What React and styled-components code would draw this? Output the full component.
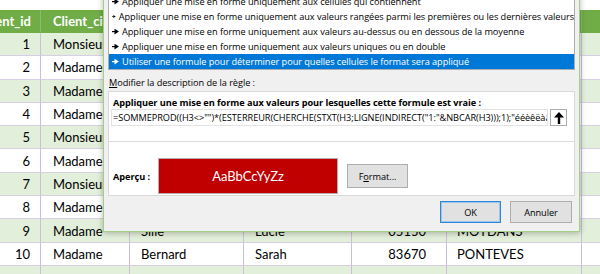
import React from 'react';
import styled, { createGlobalStyle } from 'styled-components';

const GlobalStyle = createGlobalStyle`
  html, body { margin: 0; padding: 0; background: #fff; }
  body { width: 600px; height: 274px; overflow: hidden; }
`;

const Page = styled.div`
  position: relative;
  width: 600px;
  height: 274px;
  overflow: hidden;
  background: #fff;
`;

const COLS = '70px 89px 114px 108px 95px 135px 80px';

const Sheet = styled.div`
  margin-left: -29px;
  padding-top: 10px;
  font-family: Lato, "Liberation Sans", sans-serif;
  font-size: 13px;
  color: #000;
`;

const Row = styled.div`
  display: grid;
  grid-template-columns: ${COLS};
  height: ${p => (p.$header ? '23px' : '23.3px')};
  background: ${p => (p.$header ? '#70ad47' : p.$alt ? '#e2efda' : '#fff')};
  color: ${p => (p.$header ? '#fff' : '#000')};
  font-weight: ${p => (p.$header ? 700 : 400)};
`;

const Cell = styled.div`
  display: flex;
  align-items: center;
  justify-content: ${p => (p.$right ? 'flex-end' : 'flex-start')};
  padding: ${p => (p.$right ? `0 ${p.$pad}px 0 0` : `0 0 0 ${p.$pad}px`)};
  border-right: 1px solid ${p => (p.$header ? '#8fb873' : '#cbbddc')};
  border-bottom: 1px solid ${p => (p.$header ? 'transparent' : '#d8cfe6')};
  white-space: nowrap;
  overflow: hidden;
  box-sizing: border-box;
`;

const Dialog = styled.div`
  position: absolute;
  left: 103px;
  top: -40px;
  width: 477px;
  height: 272px;
  box-sizing: border-box;
  background: #f0f0f0;
  border: 1px solid #a3cf85;
  box-shadow: 0 1px 6px rgba(0, 0, 0, 0.28);
  padding: 17px 4px 0 4px;
  display: flex;
  flex-direction: column;
  font-family: "Open Sans", "Noto Sans", sans-serif;
  font-size: 9.2px;
  letter-spacing: -0.05px;
  color: #000;
`;

const ListBox = styled.div`
  height: 92px;
  box-sizing: border-box;
  background: #fff;
  border: 1px solid #acacac;
  overflow: hidden;
`;

const Item = styled.div`
  height: 15px;
  display: flex;
  align-items: center;
  gap: 3px;
  padding-left: 3px;
  white-space: nowrap;
  background: ${p => (p.$selected ? '#0078d7' : 'transparent')};
  color: ${p => (p.$selected ? '#fff' : '#000')};
`;

const Label = styled.div`
  margin-top: 7px;
  height: 12px;
  line-height: 12px;
  padding-left: 1px;
`;

const Panel = styled.div`
  margin-top: 2px;
  background: #fff;
  border: 1px solid #d9d9d9;
  display: flex;
  flex-direction: column;
`;

const RuleSection = styled.div`
  height: 50px;
  box-sizing: border-box;
  padding: 5px 0 0 4px;
  border-bottom: 1px solid #dcdcdc;
`;

const RuleTitle = styled.div`
  font-weight: 700;
  height: 12px;
  line-height: 12px;
  white-space: nowrap;
  letter-spacing: -0.06px;
`;

const FormulaRow = styled.div`
  display: flex;
  align-items: flex-start;
  gap: 2px;
  margin-left: -2px;
`;

const FormulaInput = styled.div`
  width: 437px;
  height: 17px;
  box-sizing: border-box;
  border: 1px solid #e3e3e3;
  padding: 0 1px;
  line-height: 15px;
  white-space: nowrap;
  overflow: hidden;
`;

const CollapseButton = styled.div`
  width: 17px;
  height: 17px;
  box-sizing: border-box;
  border: 1px solid #adadad;
  background: #fff;
  display: flex;
  align-items: center;
  justify-content: center;
`;

const PreviewSection = styled.div`
  height: 53px;
  box-sizing: border-box;
  padding: 16px 0 1px 4px;
  display: flex;
  align-items: center;
`;

const PreviewLabel = styled.div`
  width: 45px;
  font-weight: 700;
`;

const PreviewBox = styled.div`
  width: 180px;
  height: 36px;
  box-sizing: border-box;
  background: #c00000;
  border: 1px solid #b9a9a9;
  color: #fff;
  display: flex;
  align-items: center;
  justify-content: center;
  font-family: Lato, "Liberation Sans", sans-serif;
  font-size: 13px;
  letter-spacing: 0;
`;

const Button = styled.div`
  width: ${p => p.$w}px;
  height: ${p => p.$h}px;
  box-sizing: border-box;
  margin-left: ${p => p.$ml || 0}px;
  background: #e1e1e1;
  border: 1px solid ${p => (p.$default ? '#2f86d6' : '#adadad')};
  box-shadow: ${p => (p.$default ? 'inset 0 0 0 1px #9cc6ec' : 'none')};
  display: flex;
  align-items: center;
  justify-content: center;
`;

const ButtonRow = styled.div`
  margin-top: 5px;
  display: flex;
  justify-content: flex-end;
  gap: 9px;
  padding-right: 3px;
`;

const Arrow = ({ color }) => (
  <svg width="7" height="7" viewBox="0 0 7 7">
    <rect x="0" y="3" width="3" height="1.2" fill={color} />
    <polygon points="2.5,0.8 7,3.6 2.5,6.4" fill={color} />
  </svg>
);

const UpArrow = () => (
  <svg width="10" height="12" viewBox="0 0 10 12">
    <rect x="3.8" y="4" width="2.4" height="8" fill="#000" />
    <polygon points="5,0 10,5.5 0,5.5" fill="#000" />
  </svg>
);

const items = [
  "Mettre en forme toutes les cellules d'après leur valeur",
  'Appliquer une mise en forme uniquement aux cellules qui contiennent',
  'Appliquer une mise en forme uniquement aux valeurs rangées parmi les premières ou les dernières valeurs',
  'Appliquer une mise en forme uniquement aux valeurs au-dessus ou en dessous de la moyenne',
  'Appliquer une mise en forme uniquement aux valeurs uniques ou en double',
  'Utiliser une formule pour déterminer pour quelles cellules le format sera appliqué',
];

const header = ['Client_id', 'Client_civilite', 'Client_nom', 'Client_prenom', 'Client_cp', 'Client_ville'];

const rows = [
  ['1', 'Monsieur', 'Martin', 'Paul', '13001', 'MARSEILLE'],
  ['2', 'Madame', 'Durand', 'Claire', '04100', 'MANOSQUE'],
  ['3', 'Madame', 'Petit', 'Anne', '83000', 'TOULON'],
  ['4', 'Madame', 'Robert', 'Julie', '06000', 'NICE'],
  ['5', 'Monsieur', 'Richard', 'Marc', '84000', 'AVIGNON'],
  ['6', 'Madame', 'Moreau', 'Sophie', '05000', 'GAP'],
  ['7', 'Monsieur', 'Simon', 'Louis', '13100', 'AIX'],
  ['8', 'Madame', 'Laurent', 'Emma', '83400', 'HYERES'],
  ['9', 'Madame', 'Sille', 'Lucie', '05150', 'MOYDANS'],
  ['10', 'Madame', 'Bernard', 'Sarah', '83670', 'PONTEVES'],
  ['', '', '', '', '', ''],
];

const formula =
  '=SOMMEPROD((H3<>"")*(ESTERREUR(CHERCHE(STXT(H3;LIGNE(INDIRECT("1:"&NBCAR(H3)));1);"ééèêëàâäîïôöùûüç";0))))>0';

export default function App() {
  return (
    <Page>
      <GlobalStyle />
      <Sheet>
        <Row $header>
          <Cell $header $right $pad={9}>{header[0]}</Cell>
          <Cell $header $pad={12}>{header[1]}</Cell>
          <Cell $header $pad={11}>{header[2]}</Cell>
          <Cell $header $pad={11}>{header[3]}</Cell>
          <Cell $header $pad={11}>{header[4]}</Cell>
          <Cell $header $pad={10}>{header[5]}</Cell>
          <Cell $header $pad={10}></Cell>
        </Row>
        {rows.map((r, i) => (
          <Row key={i} $alt={i % 2 === 0}>
            <Cell $right $pad={10}>{r[0]}</Cell>
            <Cell $pad={12}>{r[1]}</Cell>
            <Cell $pad={11}>{r[2]}</Cell>
            <Cell $pad={11}>{r[3]}</Cell>
            <Cell $right $pad={20}>{r[4]}</Cell>
            <Cell $pad={10}>{r[5]}</Cell>
            <Cell $pad={10}></Cell>
          </Row>
        ))}
      </Sheet>

      <Dialog>
        <ListBox>
          {items.map((t, i) => (
            <Item key={i} $selected={i === 5}>
              <Arrow color={i === 5 ? '#fff' : '#000'} />
              <span>{t}</span>
            </Item>
          ))}
        </ListBox>
        <Label>
          <u>M</u>odifier la description de la règle :
        </Label>
        <Panel>
          <RuleSection>
            <RuleTitle>
              Appliquer une mise en forme aux valeurs pour lesquelles cette formule est vraie :
            </RuleTitle>
            <FormulaRow>
              <FormulaInput>{formula}</FormulaInput>
              <CollapseButton>
                <UpArrow />
              </CollapseButton>
            </FormulaRow>
          </RuleSection>
          <PreviewSection>
            <PreviewLabel>Aperçu :</PreviewLabel>
            <PreviewBox>AaBbCcYyZz</PreviewBox>
            <Button $w={61} $h={24} $ml={9}>
              F<u>o</u>rmat...
            </Button>
          </PreviewSection>
        </Panel>
        <ButtonRow>
          <Button $w={61} $h={22} $default>OK</Button>
          <Button $w={62} $h={22}>Annuler</Button>
        </ButtonRow>
      </Dialog>
    </Page>
  );
}
